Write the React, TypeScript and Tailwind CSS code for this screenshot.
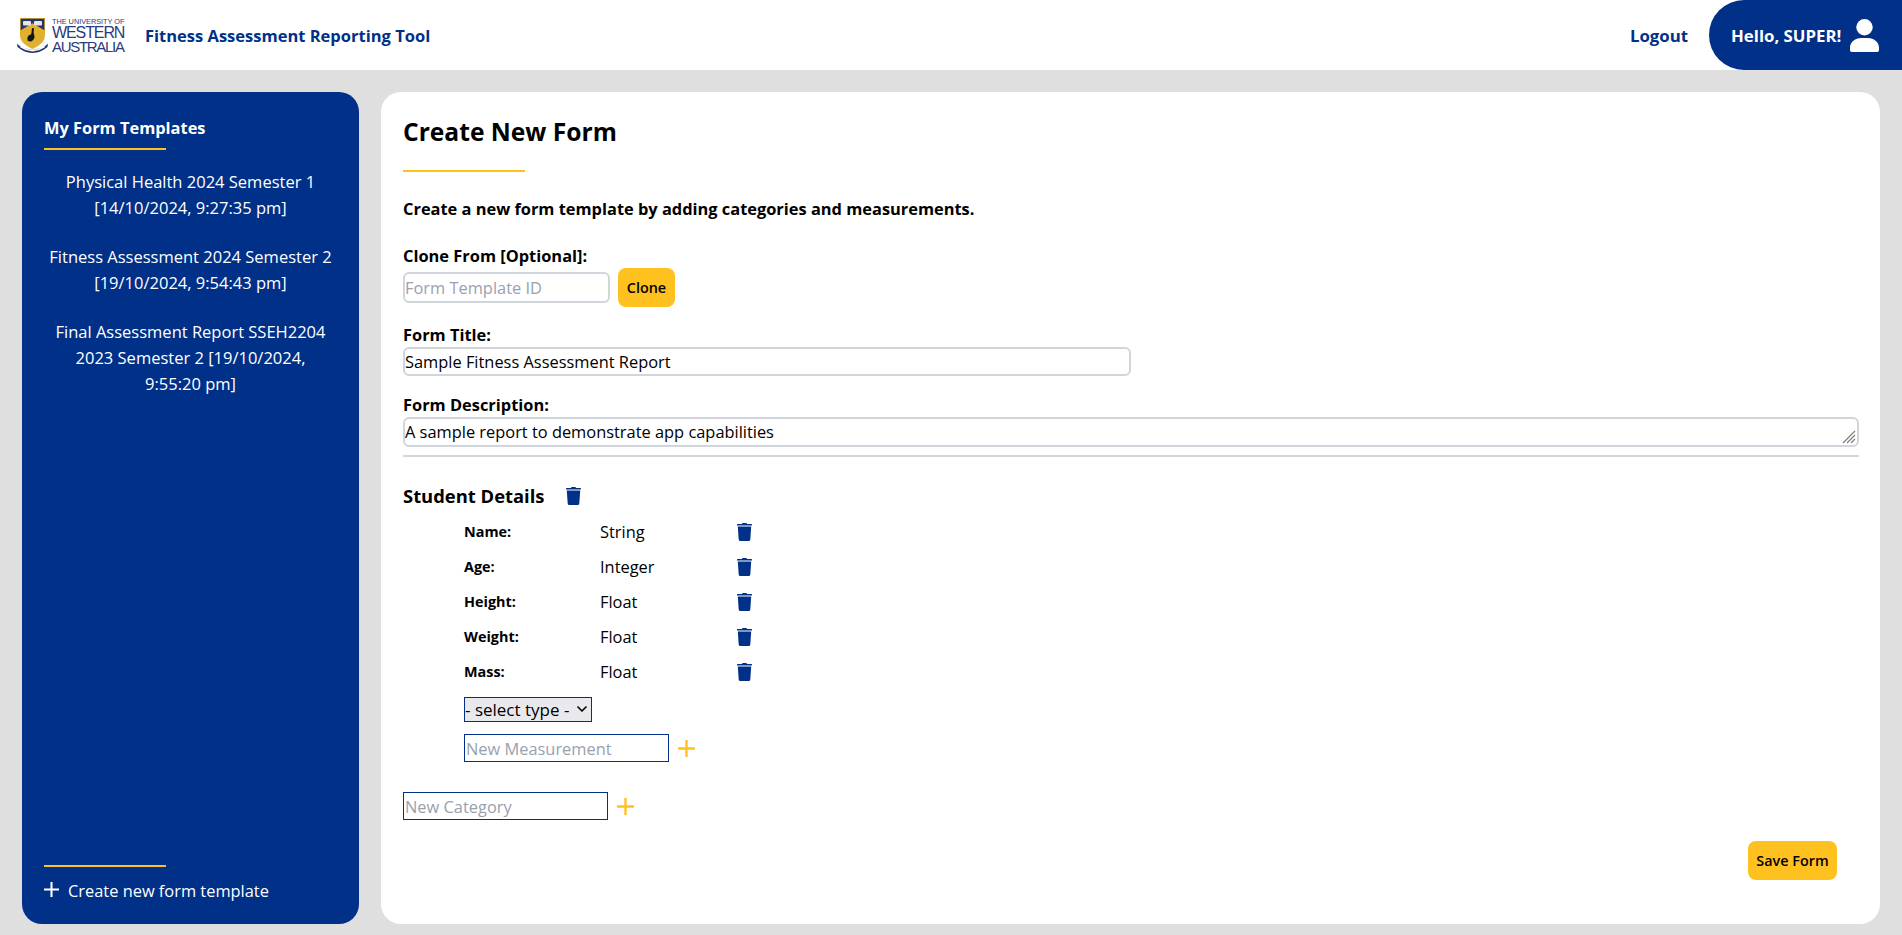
import { ChevronDown } from 'lucide-react';

const font = { fontFamily: '"Open Sans", "Noto Sans", sans-serif' };

const templates = [
  'Physical Health 2024 Semester 1 [14/10/2024, 9:27:35 pm]',
  'Fitness Assessment 2024 Semester 2 [19/10/2024, 9:54:43 pm]',
  'Final Assessment Report SSEH2204 2023 Semester 2 [19/10/2024, 9:55:20 pm]',
];

const measurements = [
  { name: 'Name:', type: 'String' },
  { name: 'Age:', type: 'Integer' },
  { name: 'Height:', type: 'Float' },
  { name: 'Weight:', type: 'Float' },
  { name: 'Mass:', type: 'Float' },
];

const TrashIcon = () => (
  <svg viewBox="0 0 15 18" className="w-[15px] h-[18px] fill-[#003087]">
    <path d="M5.500 0h4l.5 1h4.400a.6.6 0 0 1 .6.6v.9H0v-.9A.6.6 0 0 1 .6 1H5z" />
    <path d="M.8 3.500h13.400l-.9 12.900A1.700 1.700 0 0 1 11.600 18H3.400a1.700 1.700 0 0 1-1.700-1.600z" />
  </svg>
);

const UserIcon = () => (
  <svg viewBox="0 0 29 33" className="w-[29px] h-[33px] fill-white shrink-0">
    <circle cx="14.500" cy="8.200" r="8.200" />
    <path d="M0 28.500C0 23 5.500 19 11 19h7c5.500 0 11 4 11 9.500v2.700a1.800 1.800 0 0 1-1.800 1.800H1.800A1.800 1.800 0 0 1 0 31.200z" />
  </svg>
);

const PlusIcon = ({ size, className }: { size: string; className: string }) => (
  <svg viewBox="0 0 16 16" className={`${size} ${className}`}>
    <path d="M8 0v16M0 8h16" fill="none" stroke="currentColor" strokeWidth="2.200" />
  </svg>
);

const Crest = () => (
  <svg viewBox="0 0 31 35" className="w-[31px] h-[35px] shrink-0">
    <path d="M3 0h25v17c0 7-6 11-12.500 14C9 28 3 24 3 17z" fill="#e0b02e" />
    <path d="M3.700.8h23.600v11.400L15.500 5.200 3.700 12.200z" fill="#27356f" />
    <rect x="6" y="3" width="8" height="4.500" rx="1" fill="#e4e6ee" />
    <rect x="17" y="3" width="8" height="4.500" rx="1" fill="#e4e6ee" />
    <path d="M11 23c-1.500-3 0-6 3-6.500 1-2.500.5-5 1-6 1-1 2.200-.4 2 .6-.6 2-.4 5 .4 7 .6 2.500-1.800 5-3.400 5.400z" fill="#151515" />
    <path d="M0 25.500c3 3 4 4 15.500 6.500C27 29.500 28 28.500 31 25.500l-.5 3.500C27 32 21 35 15.500 35S4 32 .5 29z" fill="#27356f" />
    <path d="M3.500 28.500c3 2 7 3.800 12 4.300 5-.5 9-2.300 12-4.300" fill="none" stroke="#fff" strokeWidth="1.600" />
  </svg>
);

const Logo = () => (
  <div className="w-[108px] flex items-center text-[#2b3a7b]" style={{ fontFamily: '"Liberation Sans", sans-serif' }}>
    <Crest />
    <div className="flex flex-col ml-[4px]">
      <span className="text-[7.300px] leading-[8px] whitespace-nowrap">THE UNIVERSITY OF</span>
      <span className="text-[16px] leading-[14px] tracking-[-1.100px]">WESTERN</span>
      <span className="text-[15px] leading-[13px] tracking-[-1.300px]">AUSTRALIA</span>
    </div>
  </div>
);

const Divider = () => <div className="w-[122px] h-[2px] bg-[#ffc120]" />;

const AddIcon = () => <PlusIcon size="w-[17px] h-[17px]" className="text-[#ffc120] ml-[9px]" />;

export default function App() {
  return (
    <div className="h-[935px] flex flex-col bg-[#dfdfdf] text-black text-[16.400px] leading-[24px] overflow-hidden" style={font}>
      <header className="h-[70px] bg-white flex items-center justify-between shrink-0">
        <div className="flex items-center pl-[17px]">
          <Logo />
          <h1 className="ml-[20px] pt-[2px] text-[16.500px] font-bold text-[#003087]">Fitness Assessment Reporting Tool</h1>
        </div>
        <div className="flex items-center h-full">
          <a className="pt-[2px] text-[16.800px] font-bold text-[#003087] mr-[21px]">Logout</a>
          <div className="h-full w-[193px] bg-[#003087] rounded-l-[35px] flex items-center pl-[22px] gap-[9px] text-white">
            <span className="pt-[2px] text-[16.800px] font-bold whitespace-nowrap">Hello, SUPER!</span>
            <UserIcon />
          </div>
        </div>
      </header>

      <div className="flex-1 flex gap-[22px] pl-[22px] pr-[22px] pt-[22px] pb-[11px] min-h-0">
        <aside className="w-[337px] bg-[#003087] rounded-[20px] text-white flex flex-col justify-between px-[22px] pt-[23px] pb-[21px]">
          <div>
            <h2 className="font-bold leading-[26px] mb-[7px]">My Form Templates</h2>
            <Divider />
            <ul className="mt-[19px] px-[4px] flex flex-col gap-[23px]">
              {templates.map(t => (
                <li key={t} className="text-center text-[16.500px] leading-[26px]">{t}</li>
              ))}
            </ul>
          </div>
          <div>
            <Divider />
            <div className="flex items-center mt-[12px] text-[16.400px]">
              <PlusIcon size="w-[15px] h-[15px]" className="mr-[9px] -mt-[3px]" />
              <span>Create new form template</span>
            </div>
          </div>
        </aside>

        <main className="flex-1 bg-white rounded-[20px] pl-[22px] pr-[21px] pt-[22px] flex flex-col">
          <h2 className="text-[24.600px] font-bold leading-[36px]">Create New Form</h2>
          <div className="mt-[20px]"><Divider /></div>
          <p className="mt-[25px] font-bold">Create a new form template by adding categories and measurements.</p>

          <label className="mt-[23px] font-bold">Clone From [Optional]:</label>
          <div className="flex items-center gap-[8px]">
            <input placeholder="Form Template ID" className="w-[207px] h-[31px] border-2 border-gray-300 rounded-md text-[16.400px] placeholder:text-gray-400 outline-none" />
            <button className="w-[57px] h-[39px] bg-[#ffc120] rounded-lg text-[14.400px] font-semibold">Clone</button>
          </div>

          <label className="mt-[16px] font-bold">Form Title:</label>
          <input defaultValue="Sample Fitness Assessment Report" className="w-[728px] h-[29px] border-2 border-gray-300 rounded-md text-[16.400px] outline-none" />

          <label className="mt-[17px] font-bold">Form Description:</label>
          <div className="relative h-[30px]">
            <textarea defaultValue="A sample report to demonstrate app capabilities" rows={1} className="block w-full h-[30px] border-2 border-gray-300 rounded-md pt-[1px] text-[16.400px] leading-[24px] outline-none resize-none" />
            <svg viewBox="0 0 14 14" className="absolute right-[3px] bottom-[3px] w-[14px] h-[14px] stroke-[#7a7a7a]">
              <path d="M1 13 13 1M5 13 13 5M9 13 13 9" fill="none" strokeWidth="1.100" />
            </svg>
          </div>
          <div className="mt-[8px] h-[2px] bg-gray-300" />

          <div className="mt-[25px] flex items-center gap-[21px]">
            <h3 className="text-[18.400px] leading-[27px] font-bold">Student Details</h3>
            <TrashIcon />
          </div>

          <div className="mt-[5px] ml-[61px]">
            {measurements.map(m => (
              <div key={m.name} className="h-[35px] flex items-center">
                <span className="w-[136px] text-[14.400px] font-bold">{m.name}</span>
                <span className="w-[137px]">{m.type}</span>
                <TrashIcon />
              </div>
            ))}
            <div className="mt-[8px] w-[128px] h-[25px] border border-[#003087] bg-[#e9e9ed] flex items-center justify-between text-[17px] pr-[1px]">
              <span className="whitespace-nowrap">- select type -</span>
              <ChevronDown className="w-[16px] h-[16px] -mt-[2px]" strokeWidth={2.500} />
            </div>
            <div className="mt-[12px] flex items-center">
              <input placeholder="New Measurement" className="w-[205px] h-[28px] border border-[#003087] px-[1px] text-[16.400px] placeholder:text-gray-400 outline-none" />
              <AddIcon />
            </div>
          </div>

          <div className="mt-[30px] flex items-center">
            <input placeholder="New Category" className="w-[205px] h-[28px] border border-[#003087] px-[1px] text-[16.400px] placeholder:text-gray-400 outline-none" />
            <AddIcon />
          </div>

          <div className="flex justify-end mt-[21px] pr-[22px]">
            <button className="w-[89px] h-[39px] bg-[#ffc120] rounded-lg text-[14.400px] font-semibold">Save Form</button>
          </div>
        </main>
      </div>
    </div>
  );
}
